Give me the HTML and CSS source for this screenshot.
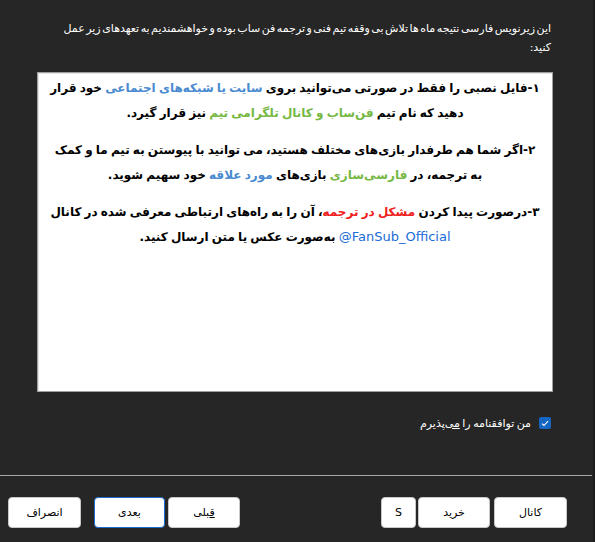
FILE: index.html
```html
<!DOCTYPE html>
<html lang="fa">
<head>
<meta charset="utf-8">
<link rel="stylesheet" href="styles.css">
</head>
<body>
<div class="window">
  <p class="intro" dir="rtl">این زیرنویس فارسی نتیجه ماه ها تلاش بی وقفه تیم فنی و ترجمه فن ساب بوده و خواهشمندیم به تعهدهای زیر عمل کنید:</p>
  <div class="box" dir="rtl">
    <p class="para">۱-فایل نصبی را فقط در صورتی می‌توانید بروی <span class="blue">سایت یا شبکه‌های اجتماعی</span> خود قرار<br>دهید که نام تیم <span class="green">فن‌ساب و کانال تلگرامی تیم</span> نیز قرار گیرد.</p>
    <p class="para">۲-اگر شما هم طرفدار بازی‌های مختلف هستید، می توانید با پیوستن به تیم ما و کمک<br>به ترجمه، در <span class="green">فارسی‌سازی</span> بازی‌های <span class="blue">مورد علاقه</span> خود سهیم شوید.</p>
    <p class="para">۳-درصورت پیدا کردن <span class="red">مشکل در ترجمه</span>، آن را به راه‌های ارتباطی معرفی شده در کانال<br><span class="link" dir="ltr">@FanSub_Official</span> به‌صورت عکس یا متن ارسال کنید.</p>
  </div>
  <div class="accept" dir="rtl">
    <span class="check"><svg width="8" height="7" viewBox="0 0 8 7"><path d="M1 3.6 L3 5.5 L7 1.2" fill="none" stroke="#fff" stroke-width="1.1"/></svg></span>
    <span class="accept-label">من توافقنامه را <u>می</u>‌پذیرم</span>
  </div>
  <div class="sep"></div>
  <div class="footer">
    <div class="group">
      <button class="btn w73">انصراف</button>
      <button class="btn w71 focused gap-l"><u>ب</u>عدی</button>
      <button class="btn w72 gap-s"><u>ق</u>بلی</button>
    </div>
    <div class="group">
      <button class="btn w35">S</button>
      <button class="btn w72 gap-xs">خرید</button>
      <button class="btn w73 gap-m">کانال</button>
    </div>
  </div>
</div>
</body>
</html>
```
FILE: styles.css
```css
html, body {
  margin: 0;
  padding: 0;
  background: #262626;
}
.window {
  width: 593px;
  height: 542px;
  background: #262626;
  border-right: 2px solid #1c1c1c;
  font-family: "DejaVu Sans", sans-serif;
  overflow: hidden;
}
.intro {
  margin: 0;
  padding: 19px 42px 0 50px;
  color: #ffffff;
  font-size: 11px;
  line-height: 19px;
  word-spacing: -2px;
  text-align: right;
  height: 34px;
}
.box {
  margin: 19px 0 0 37px;
  width: 514px;
  height: 315px;
  background: #ffffff;
  border: 1px solid #a0a0a0;
  box-shadow: inset 1px 1px 0 #e4e4e4;
  padding-top: 3px;
  box-sizing: content-box;
}
.para {
  margin: 0 0 13px 0;
  color: #000;
  font-weight: bold;
  font-size: 12px;
  line-height: 24.5px;
  word-spacing: -1px;
  text-align: center;
}
.blue { color: #4a8ad0; }
.green { color: #76b844; }
.red { color: #f02020; }
.link {
  color: #1a6cd8;
  font-weight: normal;
  font-size: 13px;
  word-spacing: 0;
  unicode-bidi: isolate;
}
.accept {
  margin: 23px 42px 0 0;
  display: flex;
  align-items: center;
  gap: 8px;
  height: 16px;
}
.check {
  width: 12px;
  height: 12px;
  background: #1566c2;
  border-radius: 2px;
  display: flex;
  align-items: center;
  justify-content: center;
}
.accept-label {
  color: #ffffff;
  font-size: 11px;
  word-spacing: -1px;
}
.sep {
  margin-top: 44px;
  height: 1px;
  width: 592px;
  background: #a8a8a8;
}
.footer {
  display: flex;
  justify-content: space-between;
  padding: 21px 26px 0 8px;
}
.group {
  display: flex;
}
.btn {
  height: 31px;
  background: #ffffff;
  border: 1px solid #c8c8c8;
  border-radius: 4px;
  font-family: "DejaVu Sans", sans-serif;
  font-size: 11px;
  color: #000;
  padding: 0;
}
.btn u { text-decoration: underline; }
.focused { border: 1px solid #1a6cd0; }
.w73 { width: 73px; }
.w72 { width: 72px; }
.w71 { width: 71px; }
.w35 { width: 35px; }
.gap-l { margin-left: 13px; }
.gap-s { margin-left: 3px; }
.gap-xs { margin-left: 2px; }
.gap-m { margin-left: 4px; }
```
